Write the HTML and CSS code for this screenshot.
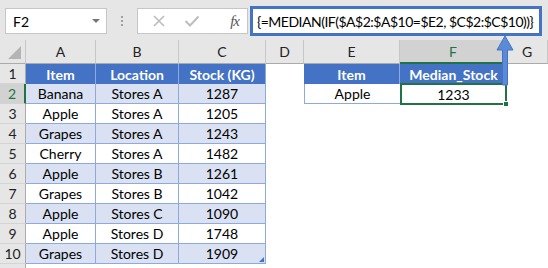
FILE: index.html
```html
<!DOCTYPE html>
<html>
<head>
<meta charset="utf-8">
<link rel="stylesheet" href="styles.css">
</head>
<body>
<div class="app">
  <div class="toolbar">
    <div class="namebox"><span>F2</span><span class="caret"></span></div>
    <div class="dots"><i></i><i></i><i></i></div>
    <div class="fxbox">
      <svg class="ic" width="14" height="14" viewBox="0 0 14 14"><path d="M2 2 L12 12 M12 2 L2 12" stroke="#bdbdbd" stroke-width="1.6" fill="none"/></svg>
      <svg class="ic" width="16" height="14" viewBox="0 0 16 14"><path d="M1.5 7 L6 11.5 L14.5 2.5" stroke="#bdbdbd" stroke-width="2" fill="none"/></svg>
      <span class="fx">fx</span>
    </div>
    <div class="formula">{=MEDIAN(IF($A$2:$A$10=$E2, $C$2:$C$10))}</div>
  </div>
  <div class="sheet">
    <div class="corner"><span class="tri"></span></div>
    <div class="ch">A</div><div class="ch">B</div><div class="ch">C</div><div class="ch">D</div><div class="ch">E</div><div class="ch sel">F</div><div class="ch">G</div>

    <div class="rh">1</div>
    <div class="th">Item</div><div class="th">Location</div><div class="th">Stock (KG)</div>
    <div class="c"></div><div class="th">Item</div><div class="th last">Median_Stock</div><div class="c"></div>

    <div class="rh sel">2</div>
    <div class="td band">Banana</div><div class="td band">Stores A</div><div class="td band">1287</div>
    <div class="c"></div><div class="td first">Apple</div><div class="td active">1233<span class="handle"></span></div><div class="c"></div>

    <div class="rh">3</div>
    <div class="td">Apple</div><div class="td">Stores A</div><div class="td">1205</div>
    <div class="c"></div><div class="c"></div><div class="c"></div><div class="c"></div>

    <div class="rh">4</div>
    <div class="td band">Grapes</div><div class="td band">Stores A</div><div class="td band">1243</div>
    <div class="c"></div><div class="c"></div><div class="c"></div><div class="c"></div>

    <div class="rh">5</div>
    <div class="td">Cherry</div><div class="td">Stores A</div><div class="td">1482</div>
    <div class="c"></div><div class="c"></div><div class="c"></div><div class="c"></div>

    <div class="rh">6</div>
    <div class="td band">Apple</div><div class="td band">Stores B</div><div class="td band">1261</div>
    <div class="c"></div><div class="c"></div><div class="c"></div><div class="c"></div>

    <div class="rh">7</div>
    <div class="td">Grapes</div><div class="td">Stores B</div><div class="td">1042</div>
    <div class="c"></div><div class="c"></div><div class="c"></div><div class="c"></div>

    <div class="rh">8</div>
    <div class="td band">Apple</div><div class="td band">Stores C</div><div class="td band">1090</div>
    <div class="c"></div><div class="c"></div><div class="c"></div><div class="c"></div>

    <div class="rh">9</div>
    <div class="td">Apple</div><div class="td">Stores D</div><div class="td">1748</div>
    <div class="c"></div><div class="c"></div><div class="c"></div><div class="c"></div>

    <div class="rh">10</div>
    <div class="td band">Grapes</div><div class="td band">Stores D</div><div class="td band end">1909<span class="tblhandle"></span></div>
    <div class="c"></div><div class="c"></div><div class="c"></div><div class="c"></div>

    <div class="rh"></div>
    <div class="c"></div><div class="c"></div><div class="c"></div><div class="c"></div><div class="c"></div><div class="c"></div><div class="c"></div>
  </div>
  <svg class="arrow" width="20" height="52" viewBox="0 0 20 52">
    <path d="M10 1 L18 15 L12.5 15 L12.5 50 L7.5 50 L7.5 15 L2 15 Z" fill="#5b8bd6" stroke="#4472c4" stroke-width="1"/>
  </svg>
</div>
</body>
</html>
```
FILE: styles.css
```css
* { box-sizing: border-box; }
html, body { margin: 0; padding: 0; background: #fff; }
body { font-family: Lato, "Liberation Sans", sans-serif; font-size: 14px; color: #000; }
.app { position: relative; width: 548px; height: 268px; overflow: hidden; }

.toolbar {
  height: 40px;
  background: #e6e6e6;
  display: flex;
  align-items: flex-start;
  padding: 8px 0 0 5px;
}
.namebox {
  width: 102px; height: 26px;
  background: #fff; border: 1px solid #c6c6c6;
  display: flex; align-items: center; justify-content: space-between;
  padding: 0 6px 0 7px;
  font-size: 14px;
}
.caret { width: 0; height: 0; border-left: 4px solid transparent; border-right: 4px solid transparent; border-top: 4px solid #777; }
.dots { width: 30px; height: 26px; display: flex; flex-direction: column; align-items: center; justify-content: center; gap: 2px; }
.dots i { display: block; width: 2px; height: 2px; background: #a0a0a0; }
.fxbox {
  width: 111px; height: 26px; background: #fff; border: 1px solid #c6c6c6;
  display: flex; align-items: center; padding: 0 8px 0 14px; gap: 0;
}
.fxbox .ic:first-child { margin-right: 18px; }
.fx { margin-left: auto; font-family: "Liberation Serif", serif; font-style: italic; font-size: 15px; color: #555; letter-spacing: -1px; }
.formula {
  margin-top: -2px; margin-left: 2px;
  width: 292px; height: 30px;
  background: #fff; border: 3px solid #4472c4;
  padding: 0 0 0 4px;
  display: flex; align-items: center;
  font-size: 14px; letter-spacing: -0.5px; white-space: nowrap;
}

.sheet {
  display: grid;
  grid-template-columns: 26px 70px 83px 87px 38px 96px 107px 41px;
  grid-template-rows: 24px repeat(11, 20px);
}
.corner { background: #e6e6e6; border-right: 1px solid #c8c8c8; border-bottom: 1px solid #ababab; position: relative; }
.tri { position: absolute; right: 4px; bottom: 4px; width: 0; height: 0; border-left: 13px solid transparent; border-bottom: 13px solid #b4b4b4; }
.ch {
  background: #e6e6e6; border-right: 1px solid #c8c8c8; border-bottom: 1px solid #ababab;
  display: flex; align-items: center; justify-content: center; font-size: 14px; color: #222;
}
.ch.sel { background: #d2d2d2; border-bottom: 2px solid #217346; color: #217346; }
.rh {
  background: #e6e6e6; border-right: 1px solid #ababab; border-bottom: 1px solid #d4d4d4;
  display: flex; align-items: center; justify-content: center; font-size: 14px; color: #222;
}
.rh.sel { background: #d2d2d2; border-right: 2px solid #217346; color: #217346; }
.c { background: #fff; }
.th {
  background: #4472c4; color: #fff; font-weight: bold;
  border-right: 1px solid #8ea9db;
  display: flex; align-items: center; justify-content: center;
}
.th.last { border-right: none; }
.td {
  background: #fff; border-right: 1px solid #8ea9db; border-bottom: 1px solid #8ea9db;
  display: flex; align-items: center; justify-content: center; position: relative;
}
.td.band { background: #d9e1f2; }
.td.first { border-left: 1px solid #8ea9db; border-right: none; }
.td.active { border: 2px solid #217346; margin: -1px 0 0 0; height: 22px; }
.handle { position: absolute; right: -4px; bottom: -4px; width: 6px; height: 6px; background: #217346; border: 1px solid #fff; }
.tblhandle { position: absolute; right: 1px; bottom: 1px; width: 0; height: 0; border-left: 5px solid transparent; border-bottom: 5px solid #4472c4; }

.arrow { position: absolute; left: 495px; top: 35px; }
```
